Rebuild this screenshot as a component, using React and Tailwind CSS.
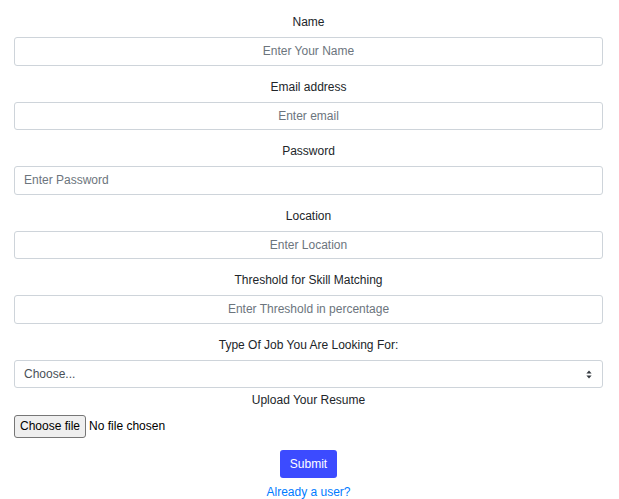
import React from "react";

function Field({ label, placeholder, left = false, type = "text" }) {
  return (
    <div className="mb-[12px] flex flex-col">
      <label className="mb-[6px] h-[18px] text-center leading-[18px]">{label}</label>
      <input
        type={type}
        placeholder={placeholder}
        className={
          "box-border h-[28.5px] w-full rounded-[3px] border border-[#ced4da] bg-white px-[9px] text-[12px] text-[#495057] outline-none placeholder:text-[#6c757d] " +
          (left ? "text-left" : "text-center")
        }
      />
    </div>
  );
}

export default function App() {
  return (
    <div
      className="min-h-[499px] bg-white pl-[14px] pr-[16px] pt-[13px] text-[12px] leading-[18px] text-[#212529]"
      style={{ fontFamily: '"Liberation Sans", Arial, sans-serif' }}
    >
      <form onSubmit={(e) => e.preventDefault()} className="flex flex-col">
        <Field label="Name" placeholder="Enter Your Name" />
        <Field label="Email address" placeholder="Enter email" type="email" />
        <Field label="Password" placeholder="Enter Password" left type="password" />
        <Field label="Location" placeholder="Enter Location" />
        <Field label="Threshold for Skill Matching" placeholder="Enter Threshold in percentage" />

        <div className="flex flex-col">
          <label className="mb-[6px] h-[18px] text-center leading-[18px]">
            Type Of Job You Are Looking For:
          </label>
          <div className="relative h-[28.5px] w-full">
            <select className="box-border h-[28.5px] w-full appearance-none rounded-[3px] border border-[#ced4da] bg-white px-[9px] text-[12px] text-[#495057] outline-none">
              <option>Choose...</option>
              <option>Full Time</option>
              <option>Part Time</option>
              <option>Internship</option>
            </select>
            <svg
              className="pointer-events-none absolute right-[11px] top-[10px]"
              width="6"
              height="9"
              viewBox="0 0 6 9"
            >
              <path d="M3 0.5 L5.6 3.6 H0.4 Z" fill="#343a40" />
              <path d="M3 8.5 L5.6 5.4 H0.4 Z" fill="#343a40" />
            </svg>
          </div>
        </div>

        <div className="mt-[2.5px] flex flex-col">
          <label className="mb-[6px] h-[18px] text-center leading-[18px]">Upload Your Resume</label>
          <label className="flex h-[23px] cursor-pointer items-center">
            <input type="file" className="hidden" />
            <span className="box-border flex h-[23px] items-center rounded-[3px] border border-[#767676] bg-[#efefef] px-[5px] text-[12px] text-black">
              Choose file
            </span>
            <span className="ml-[3px] text-[12px] text-black">No file chosen</span>
          </label>
        </div>

        <div className="mt-[12px] flex flex-col items-center">
          <button
            type="submit"
            className="box-border h-[28.5px] rounded-[3px] bg-[#3c4bff] px-[10px] text-[12px] text-white"
          >
            Submit
          </button>
          <a href="#" className="mt-[5px] leading-[18px] text-[#007bff]">
            Already a user?
          </a>
        </div>
      </form>
    </div>
  );
}
